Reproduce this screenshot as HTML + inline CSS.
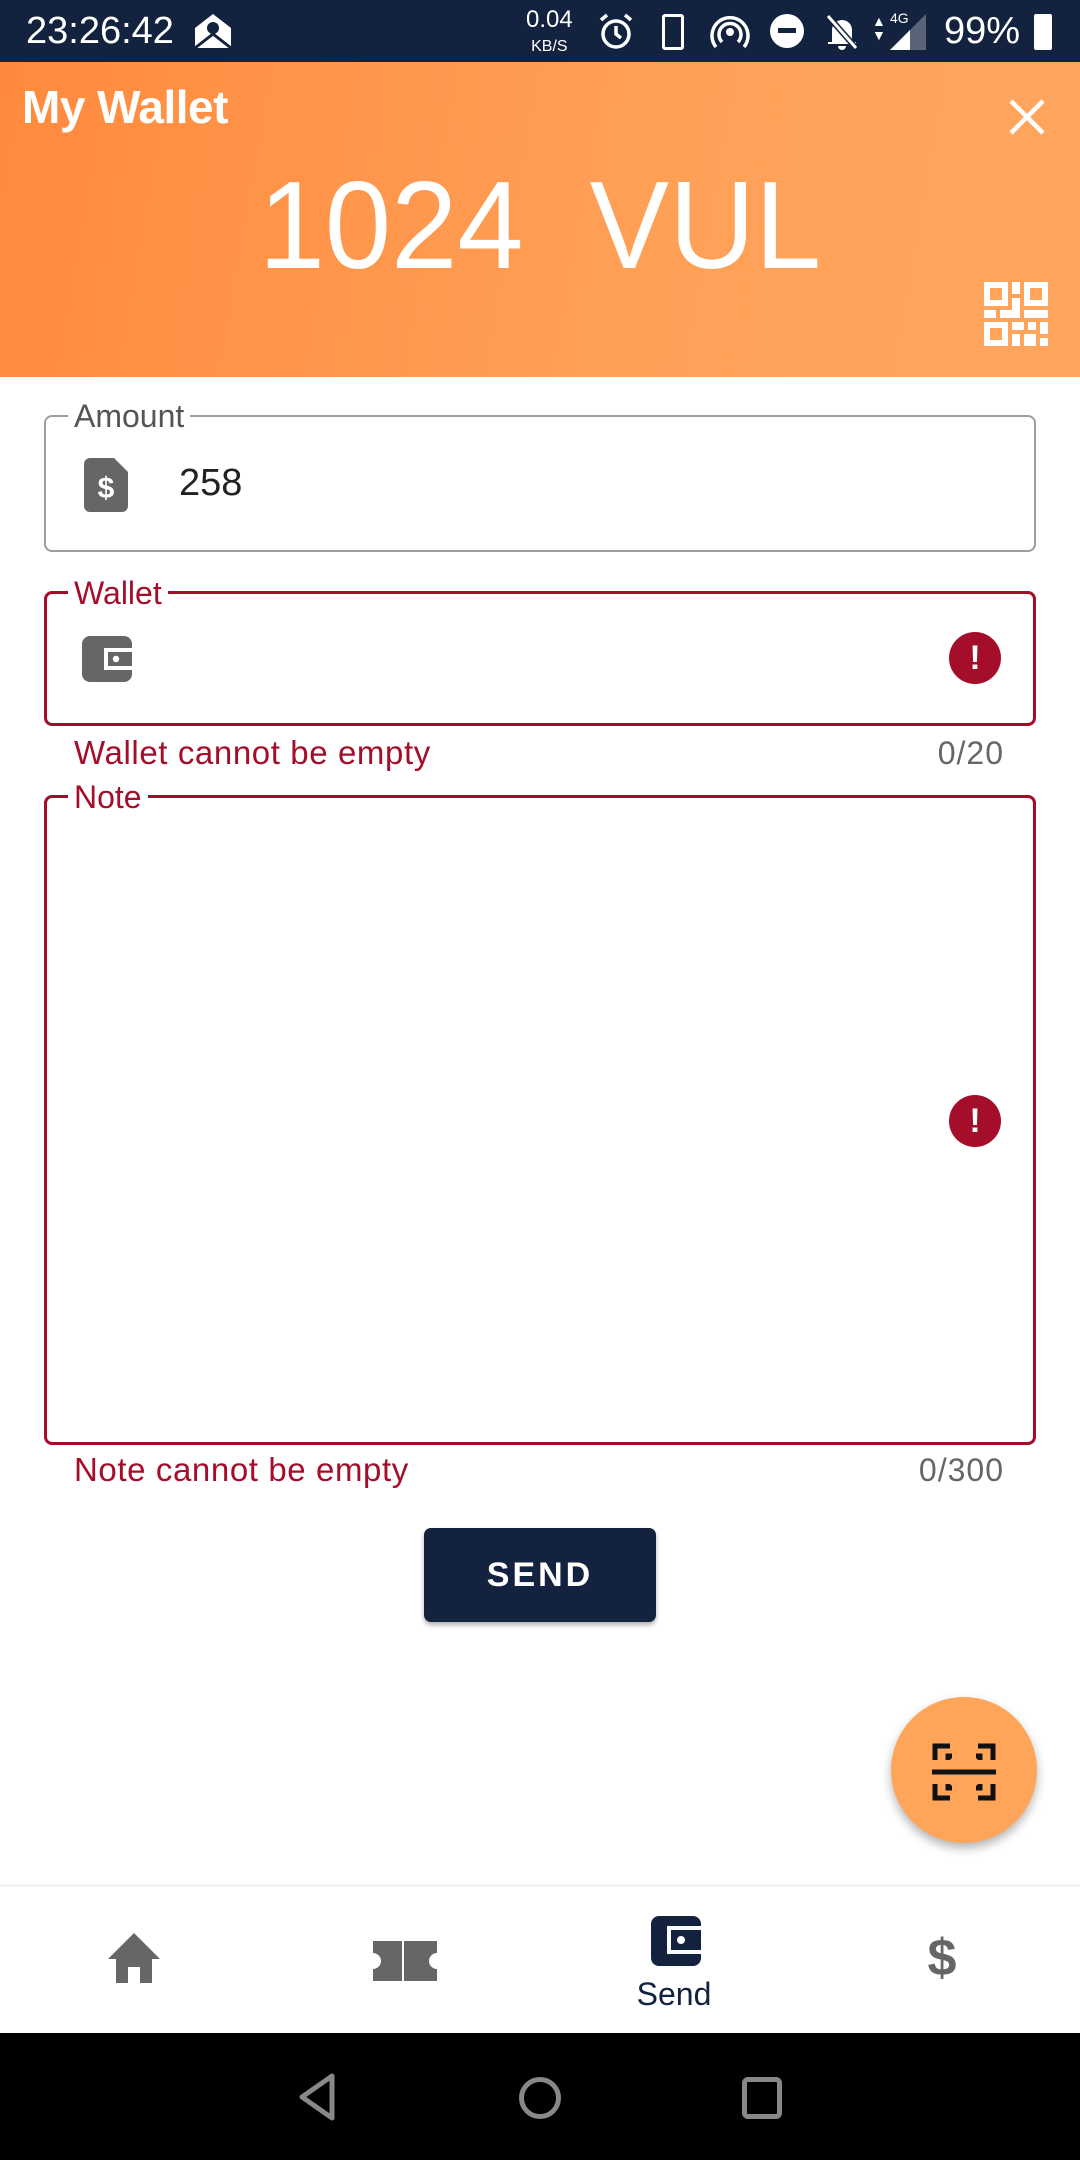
<!DOCTYPE html>
<html><head><meta charset="utf-8"><style>
*{margin:0;padding:0;box-sizing:border-box}
body{width:1080px;height:2160px;position:relative;overflow:hidden;background:#fff;font-family:"Liberation Sans","DejaVu Sans",sans-serif}
.abs{position:absolute}
.status{left:0;top:0;width:1080px;height:62px;background:#13223f;color:#fff}
.header{left:0;top:62px;width:1080px;height:315px;background:linear-gradient(100deg,#ff8a3d 0%,#ffa057 60%,#ffa65e 100%)}
.field{border:2px solid #9e9e9e;border-radius:8px;left:44px;width:992px}
.err{border:3px solid #a50e2a}
.lbl{background:#fff;padding:0 6px;font-size:32px;color:#555;line-height:30px}
.red{color:#a50e2a}
.ei{width:52px;height:52px;border-radius:50%;background:#a50e2a;color:#fff;font-weight:bold;font-size:34px;text-align:center;line-height:52px}
.msg{font-size:33px}
.cnt{font-size:32px;color:#666;text-align:right}
</style></head><body>
<div class="abs status">
 <div class="abs" style="left:26px;top:10px;font-size:38px">23:26:42</div>
 <svg class="abs" style="left:193px;top:12px" width="40" height="38" viewBox="0 0 40 38"><path d="M2 16 L20 2 L38 16 V36 H2Z" fill="#fff"/><path d="M2 36 L20 22 L38 36" stroke="#13223f" stroke-width="3" fill="none"/><circle cx="20" cy="16" r="6" fill="#13223f"/></svg>
 <div class="abs" style="left:526px;top:8px;font-size:24px;line-height:24px;text-align:center">0.04<br><span style="font-size:16px">KB/S</span></div>
 <svg class="abs" style="left:596px;top:12px" width="40" height="40" viewBox="0 0 40 40"><circle cx="20" cy="22" r="13" stroke="#fff" stroke-width="3.5" fill="none"/><path d="M20 14V22L25 26M5 8L11 3M35 8L29 3" stroke="#fff" stroke-width="3.5" fill="none"/></svg>
 <div class="abs" style="left:662px;top:14px;width:22px;height:36px;border:3.5px solid #fff;border-radius:3px"></div>
 <svg class="abs" style="left:710px;top:12px" width="40" height="40" viewBox="0 0 40 40"><circle cx="20" cy="20" r="4" fill="#fff"/><path d="M12 30A11 11 0 1 1 28 30M6 35A18 18 0 1 1 34 35" stroke="#fff" stroke-width="3.5" fill="none"/></svg>
 <div class="abs" style="left:770px;top:14px;width:34px;height:34px;border-radius:50%;background:#fff"><div class="abs" style="left:8px;top:14px;width:18px;height:5px;background:#13223f"></div></div>
 <svg class="abs" style="left:822px;top:12px" width="40" height="40" viewBox="0 0 40 40"><path d="M10 30V18A10 10 0 0 1 30 18V30H34V32H6V30Z M16 34H24A4 4 0 0 1 16 34Z" fill="#fff"/><path d="M6 4L34 36" stroke="#13223f" stroke-width="6"/><path d="M6 4L34 36" stroke="#fff" stroke-width="3"/></svg>
 <div class="abs" style="left:872px;top:14px;color:#fff;font-size:14px;line-height:14px">▲<br>▼</div>
 <div class="abs" style="left:890px;top:10px;color:#fff;font-size:14px">4G</div>
 <svg class="abs" style="left:890px;top:14px" width="36" height="36"><polygon points="36,0 36,36 0,36" fill="#5a6478"/><polygon points="20,16 20,36 0,36" fill="#fff"/></svg>
 <div class="abs" style="left:944px;top:10px;font-size:38px">99%</div>
 <div class="abs" style="left:1034px;top:14px;width:18px;height:36px;background:#fff;border-radius:2px"></div>
</div>
<div class="abs header">
 <div class="abs" style="left:22px;top:18px;font-size:46px;font-weight:bold;color:#fff;letter-spacing:-0.5px">My Wallet</div>
 <svg class="abs" style="left:1008px;top:36px" width="38" height="38"><path d="M3 3L35 35M35 3L3 35" stroke="#fff" stroke-width="4.5"/></svg>
 <div class="abs" style="left:0;top:94px;width:1080px;text-align:center;font-size:124px;color:#fff;white-space:pre;line-height:140px;transform:scaleX(0.96)">1024  VUL</div>
 <svg class="abs" style="left:984px;top:220px" width="64" height="64" viewBox="0 0 16 16" fill="#fff"><path d="M0 0h6v6H0zM1.5 1.5v3h3v-3zM10 0h6v6h-6zM11.5 1.5v3h3v-3zM0 10h6v6H0zM1.5 11.5v3h3v-3zM7 0h2v3H7zM7 4h2v3H7zM0 7h3v2H0zM4 7h5v2H4zM10 7h6v2h-6zM7 10h3v2H7zM11 10h2v2h-2zM14 10h2v3h-2zM7 13h2v3H7zM10 13h3v3h-3zM14 14h2v2h-2z"/></svg>
</div>
<div class="abs field" style="top:415px;height:137px"></div>
<div class="abs lbl" style="left:68px;top:401px">Amount</div>
<svg class="abs" style="left:84px;top:458px" width="44" height="54" viewBox="0 0 22 27"><path d="M0 3A3 3 0 0 1 3 0H15L22 7V24A3 3 0 0 1 19 27H3A3 3 0 0 1 0 24Z" fill="#666"/><text x="11" y="20" font-size="15" font-weight="bold" fill="#fff" text-anchor="middle" font-family="Liberation Sans">$</text></svg>
<div class="abs" style="left:179px;top:462px;font-size:38px;color:#222">258</div>
<div class="abs field err" style="top:591px;height:135px"></div>
<div class="abs lbl red" style="left:68px;top:578px">Wallet</div>
<svg class="abs" style="left:82px;top:636px" width="50" height="46" viewBox="0 0 25 23"><path d="M0 4A4 4 0 0 1 4 0H21A4 4 0 0 1 25 4V19A4 4 0 0 1 21 23H4A4 4 0 0 1 0 19Z" fill="#666"/><rect x="11" y="6" width="14" height="11" fill="#fff"/><rect x="13" y="8" width="12" height="7" fill="#666"/><circle cx="17" cy="11.5" r="1.6" fill="#fff"/></svg>
<div class="abs ei" style="left:949px;top:632px">!</div>
<div class="abs msg red" style="left:74px;top:734px;letter-spacing:0.6px">Wallet cannot be empty</div>
<div class="abs cnt" style="left:800px;width:204px;top:735px;letter-spacing:1px">0/20</div>
<div class="abs field err" style="top:795px;height:650px"></div>
<div class="abs lbl red" style="left:68px;top:782px">Note</div>
<div class="abs ei" style="left:949px;top:1095px">!</div>
<div class="abs msg red" style="left:74px;top:1451px;letter-spacing:0.6px">Note cannot be empty</div>
<div class="abs cnt" style="left:800px;width:204px;top:1452px;letter-spacing:1px">0/300</div>
<div class="abs" style="left:424px;top:1528px;width:232px;height:94px;background:#13223f;border-radius:7px;box-shadow:0 3px 5px rgba(0,0,0,.3);color:#fff;font-weight:bold;font-size:34px;letter-spacing:3px;text-align:center;line-height:94px">SEND</div>
<div class="abs" style="left:891px;top:1697px;width:146px;height:146px;border-radius:50%;background:#ffa55a;box-shadow:0 5px 10px rgba(0,0,0,.3)"></div>
<svg class="abs" style="left:932px;top:1740px" width="64" height="64" viewBox="0 0 64 64" stroke="#111" stroke-width="5" fill="none"><path d="M3 20V6H18M46 6H61V20M3 44V58H18M46 58H61V44M16 20V16H20M44 16H48V20M16 44V48H20M48 44V48H44"/><path d="M0 32H64"/></svg>
<div class="abs" style="left:0;top:1884px;width:1080px;height:3px;background:#f2f2f2"></div>
<svg class="abs" style="left:108px;top:1933px" width="52" height="50" viewBox="0 0 26 25"><path d="M13 0L26 13H22V25H16V17H10V25H4V13H0Z" fill="#666"/></svg>
<svg class="abs" style="left:373px;top:1941px" width="64" height="40" viewBox="0 0 32 20"><path d="M0 0H32V6A4 4 0 0 0 32 14V20H0V14A4 4 0 0 0 0 6Z" fill="#666"/><path d="M15 0V20" stroke="#fff" stroke-width="1"/></svg>
<svg class="abs" style="left:651px;top:1916px" width="50" height="50" viewBox="0 0 25 25"><path d="M0 4A4 4 0 0 1 4 0H21A4 4 0 0 1 25 4V21A4 4 0 0 1 21 25H4A4 4 0 0 1 0 21Z" fill="#13223f"/><rect x="8" y="5" width="17" height="14" fill="#fff"/><rect x="10" y="7" width="15" height="10" fill="#13223f"/><circle cx="15" cy="12" r="2" fill="#fff"/></svg>
<div class="abs" style="left:574px;top:1976px;width:200px;text-align:center;font-size:32px;color:#13223f">Send</div>
<div class="abs" style="left:912px;top:1928px;width:60px;text-align:center;font-size:52px;font-weight:bold;color:#666">$</div>
<div class="abs" style="left:0;top:2033px;width:1080px;height:127px;background:#000"></div>
<svg class="abs" style="left:296px;top:2072px" width="40" height="50"><path d="M36 4V46L6 25Z" stroke="#888" stroke-width="5" fill="none" stroke-linejoin="round"/></svg>
<div class="abs" style="left:519px;top:2077px;width:42px;height:42px;border:5px solid #888;border-radius:50%"></div>
<div class="abs" style="left:742px;top:2077px;width:40px;height:42px;border:5px solid #888;border-radius:6px"></div>
</body></html>
